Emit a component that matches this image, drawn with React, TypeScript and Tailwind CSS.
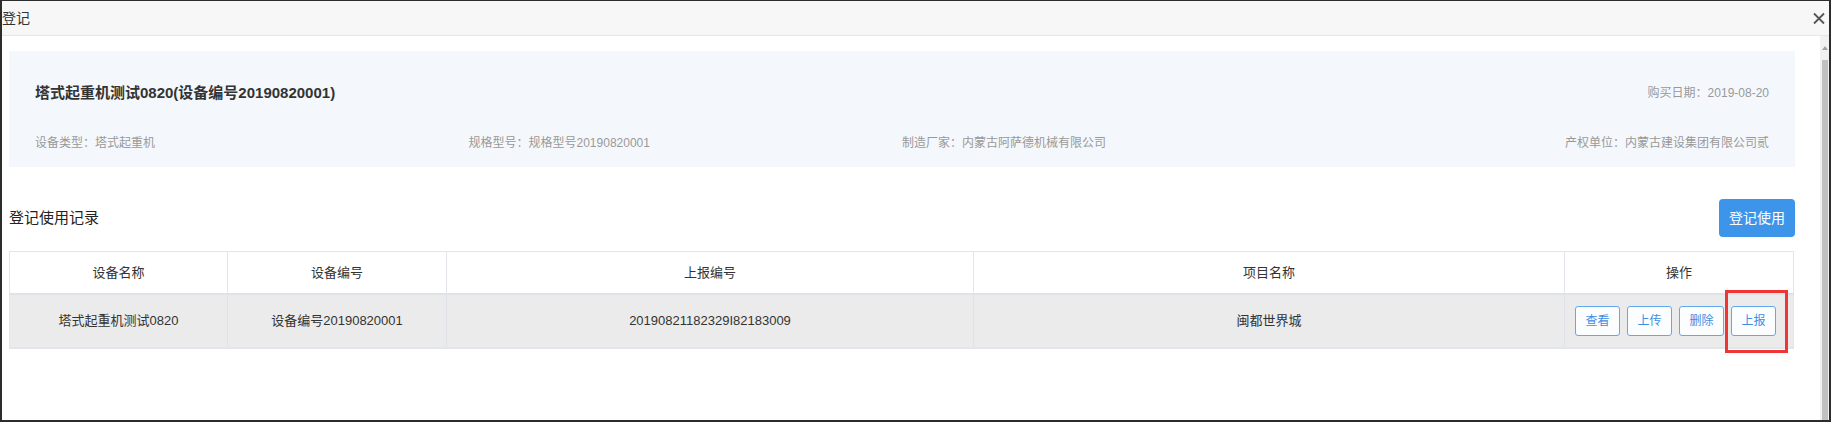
const info = {
    title: '塔式起重机测试0820(设备编号20190820001)',
    buyDate: '2019-08-20',
    type: '塔式起重机',
    model: '规格型号20190820001',
    maker: '内蒙古阿萨德机械有限公司',
    owner: '内蒙古建设集团有限公司贰',
};

const rows = [
    {
        name: '塔式起重机测试0820',
        code: '设备编号20190820001',
        report: '20190821182329I82183009',
        project: '闽都世界城',
    },
];

const actions = ['查看', '上传', '删除', '上报'];

export default function App() {
    return (
        <div className="w-[1831px] h-[422px] flex flex-col bg-white border-x-2 border-b-2 border-t border-[#2c2c2c] overflow-hidden font-['Liberation_Sans','Noto_Sans_CJK_SC',sans-serif]">
            {/* Dialog header */}
            <div className="h-[35px] shrink-0 flex items-center justify-between bg-[#f7f7f7] border-b border-[#e6e6e6] pr-[4px]">
                <span className="text-[14px] text-[#333]">登记</span>
                <svg width="12" height="13" viewBox="0 0 12 13" className="mt-[1px]">
                    <path d="M1 1.5 L11 11.5 M11 1.5 L1 11.5" stroke="#555" strokeWidth="1.8" fill="none" />
                </svg>
            </div>

            <div className="flex flex-1 min-h-0">
                <div className="flex-1 pl-[7px] pr-[25px] pt-[15px]">
                    {/* Equipment info */}
                    <div className="h-[116px] bg-[#f4f8fc] px-[26px] pt-[30px]">
                        <div className="flex items-center justify-between h-[24px]">
                            <h2 className="text-[15px] font-bold text-[#333]">{info.title}</h2>
                            <span className="text-[12px] text-[#999]">购买日期：{info.buyDate}</span>
                        </div>
                        <div className="grid grid-cols-4 mt-[28px] h-[20px] items-center text-[12px] text-[#999]">
                            <span>设备类型：{info.type}</span>
                            <span>规格型号：{info.model}</span>
                            <span>制造厂家：{info.maker}</span>
                            <span className="text-right">产权单位：{info.owner}</span>
                        </div>
                    </div>

                    {/* Section header */}
                    <div className="mt-[32px] h-[38px] flex items-center justify-between">
                        <h3 className="text-[15px] text-[#222]">登记使用记录</h3>
                        <button className="w-[76px] h-[38px] rounded-[4px] bg-[#3d95ea] text-white text-[14px]">
                            登记使用
                        </button>
                    </div>

                    {/* Records table */}
                    <table className="mt-[14px] w-[1785px] table-fixed border-collapse border border-b-2 border-[#e2e5ea] text-[13px] text-[#333]">
                        <colgroup>
                            <col className="w-[218px]" />
                            <col className="w-[219px]" />
                            <col className="w-[527px]" />
                            <col className="w-[591px]" />
                            <col />
                        </colgroup>
                        <thead>
                            <tr className="h-[42px] bg-white border-b-2 border-[#dfe2e7]">
                                <th className="font-normal border-r border-[#e2e5ea]">设备名称</th>
                                <th className="font-normal border-r border-[#e2e5ea]">设备编号</th>
                                <th className="font-normal border-r border-[#e2e5ea]">上报编号</th>
                                <th className="font-normal border-r border-[#e2e5ea]">项目名称</th>
                                <th className="font-normal">操作</th>
                            </tr>
                        </thead>
                        <tbody>
                            {rows.map((r) => (
                                <tr key={r.report} className="h-[54px] bg-[#ebebeb]">
                                    <td className="text-center border-r border-[#dfe2e7]">{r.name}</td>
                                    <td className="text-center border-r border-[#dfe2e7]">{r.code}</td>
                                    <td className="text-center border-r border-[#dfe2e7]">{r.report}</td>
                                    <td className="text-center border-r border-[#dfe2e7]">{r.project}</td>
                                    <td>
                                        <div className="flex gap-[7px] pl-[10px]">
                                            {actions.map((a) => (
                                                <span key={a} className="relative">
                                                    <button className="w-[45px] h-[30px] rounded-[3px] border border-[#62a8ee] bg-[#fbfdff] text-[12px] text-[#3d8fe3]">
                                                        {a}
                                                    </button>
                                                    {a === '上报' && (
                                                        <span className="absolute left-[-6px] top-[-16px] w-[63px] h-[63px] border-[3px] border-[#ef3535]" />
                                                    )}
                                                </span>
                                            ))}
                                        </div>
                                    </td>
                                </tr>
                            ))}
                        </tbody>
                    </table>
                </div>

                {/* Scrollbar */}
                <div className="w-[9px] shrink-0 flex flex-col bg-[#f1f1f1]">
                    <div className="h-[24px] flex items-center justify-center">
                        <svg width="6" height="4" viewBox="0 0 6 4">
                            <path d="M0 4 L3 0 L6 4 Z" fill="#a3a3a3" />
                        </svg>
                    </div>
                    <div className="flex-1 ml-[2px] w-[6px] bg-[#c1c1c1]" />
                </div>
            </div>
        </div>
    );
}
